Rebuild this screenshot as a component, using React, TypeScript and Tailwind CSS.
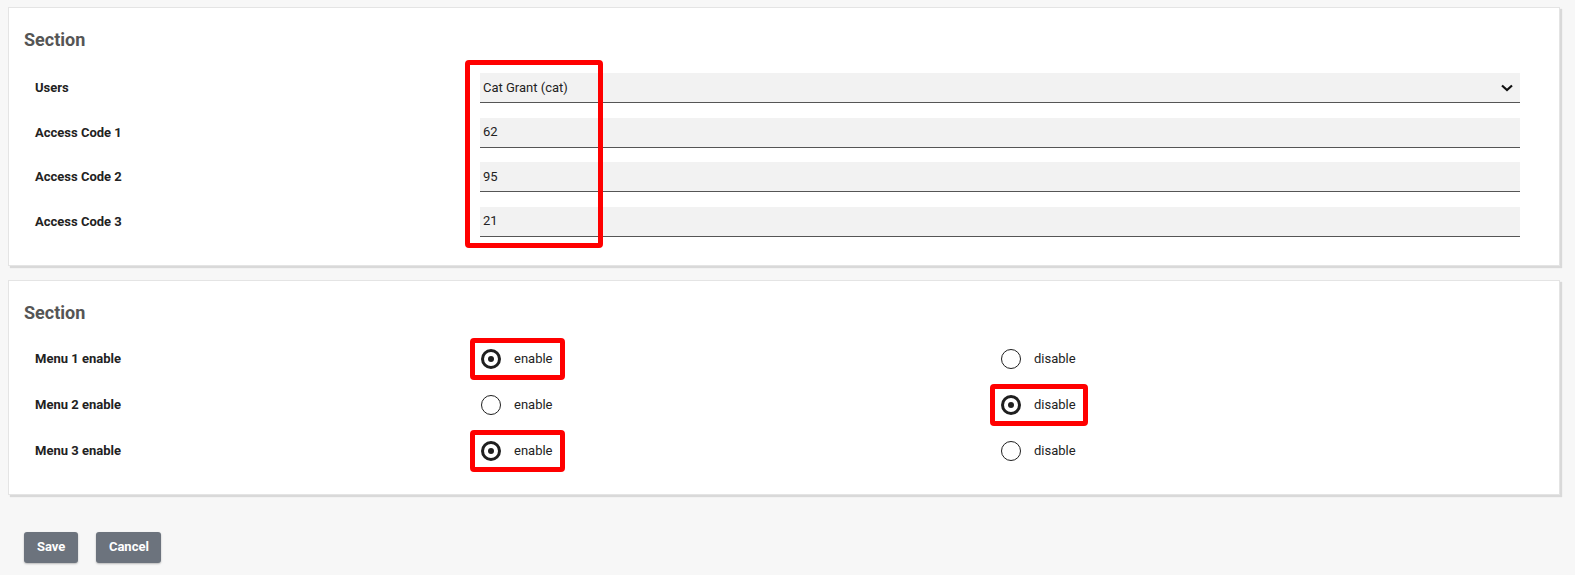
import React from "react";

const font = { fontFamily: "Roboto, 'Liberation Sans', Arial, sans-serif" };

function RedBox({ className }: { className: string }) {
  return <span className={"pointer-events-none absolute rounded-[4px] border-[5px] border-[#ff0000] " + className} />;
}

function Radio({ label, checked, marked }: { label: string; checked?: boolean; marked?: boolean }) {
  return (
    <div className="relative flex h-5 w-fit items-center gap-[13px]">
      {checked ? (
        <span className="flex h-5 w-5 items-center justify-center rounded-full border-[3px] border-[#1f1f1f]">
          <span className="h-[6px] w-[6px] rounded-full bg-[#1f1f1f]" />
        </span>
      ) : (
        <span className="h-5 w-5 rounded-full border-[1.5px] border-[#1f1f1f]" />
      )}
      <span className="text-[13px] text-[#222]">{label}</span>
      {marked && <RedBox className="-left-[11px] -right-[12px] -top-[11px] -bottom-[11px]" />}
    </div>
  );
}

const codes = [
  { label: "Access Code 1", value: "62" },
  { label: "Access Code 2", value: "95" },
  { label: "Access Code 3", value: "21" },
];

const menus = [
  { label: "Menu 1 enable", enable: true },
  { label: "Menu 2 enable", enable: false },
  { label: "Menu 3 enable", enable: true },
];

export default function App() {
  return (
    <div className="min-h-screen bg-[#f7f7f7] pl-[8px] pr-[15px] pt-[7px]" style={font}>
      <div className="border border-[#e4e4e4] bg-white pb-[28px] pl-[15px] pr-[39px] pt-[21px] shadow-[2px_2px_1px_rgba(0,0,0,0.12)]">
        <h2 className="h-[22px] text-[18px] font-bold leading-[22px] text-[#555]">Section</h2>
        <div className="mt-[22px] flex">
          <div className="flex w-[456px] flex-col gap-[14.5px] pl-[11px]">
            <div className="flex h-[30px] items-center text-[13px] font-bold text-[#222]">Users</div>
            {codes.map((c) => (
              <div key={c.label} className="flex h-[30px] items-center text-[13px] font-bold text-[#222]">
                {c.label}
              </div>
            ))}
          </div>
          <div className="relative flex flex-1 flex-col gap-[14.5px]">
            <div className="flex h-[30px] items-center justify-between border-b border-[#555] bg-[#f2f2f2] pl-[3px] pr-[7px] text-[13px] text-[#222]">
              <span>Cat Grant (cat)</span>
              <svg width="12" height="8" viewBox="0 0 12 8">
                <polyline points="1,1.5 6,6 11,1.5" fill="none" stroke="#111" strokeWidth="2.2" />
              </svg>
            </div>
            {codes.map((c) => (
              <div key={c.label} className="flex h-[30px] items-center border-b border-[#555] bg-[#f2f2f2] pl-[3px] text-[13px] text-[#222]">
                {c.value}
              </div>
            ))}
            <RedBox className="-left-[15px] -top-[13px] -bottom-[11px] w-[138px]" />
          </div>
        </div>
      </div>

      <div className="mt-[14px] border border-[#e4e4e4] bg-white pb-[20px] pl-[15px] pr-[39px] pt-[21px] shadow-[2px_2px_1px_rgba(0,0,0,0.12)]">
        <h2 className="h-[22px] text-[18px] font-bold leading-[22px] text-[#555]">Section</h2>
        <div className="mt-[12px] flex flex-col">
          {menus.map((m, i) => (
            <div key={m.label} className="flex h-[46px] items-center">
              <div className="w-[455px] pl-[11px] text-[13px] font-bold text-[#222]">{m.label}</div>
              <div className="grid flex-1 grid-cols-[520px_1fr] pl-[2px]">
                <Radio label="enable" checked={m.enable} marked={m.enable} />
                <Radio label="disable" checked={!m.enable} marked={!m.enable && i === 1} />
              </div>
            </div>
          ))}
        </div>
      </div>

      <div className="mt-[37px] flex gap-[18px] pl-[16px]">
        <button className="h-[31px] rounded-[3px] bg-[#6c737d] px-[13px] text-[13px] font-bold text-white shadow-[0_1px_2px_rgba(0,0,0,0.25)]">
          Save
        </button>
        <button className="h-[31px] rounded-[3px] bg-[#6c737d] px-[12.5px] text-[13px] font-bold text-white shadow-[0_1px_2px_rgba(0,0,0,0.25)]">
          Cancel
        </button>
      </div>
    </div>
  );
}
